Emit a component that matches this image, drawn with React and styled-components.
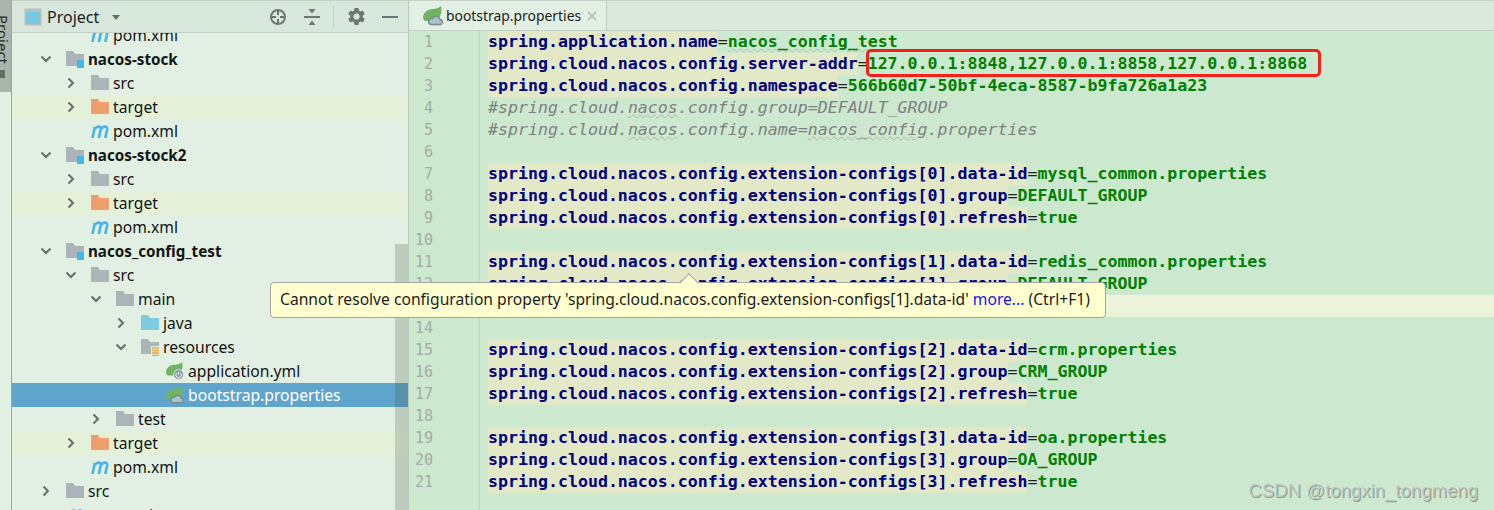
import React from "react";
import styled, { createGlobalStyle } from "styled-components";
import { MdSettings } from "react-icons/md";

const GlobalStyle = createGlobalStyle`
  html, body {
    margin: 0;
    padding: 0;
    background: #cce8cf;
  }
  * {
    box-sizing: border-box;
  }
`;

const UI_FONT = `"Noto Sans", "Open Sans", sans-serif`;
const MONO_FONT = `"DejaVu Sans Mono", "Liberation Mono", monospace`;

const TREE = [
  { label: "pom.xml", depth: 2, icon: "maven" },
  { label: "nacos-stock", depth: 1, icon: "module", open: true, bold: true },
  { label: "src", depth: 2, icon: "folder", closed: true },
  { label: "target", depth: 2, icon: "target", closed: true, excluded: true },
  { label: "pom.xml", depth: 2, icon: "maven" },
  { label: "nacos-stock2", depth: 1, icon: "module", open: true, bold: true },
  { label: "src", depth: 2, icon: "folder", closed: true },
  { label: "target", depth: 2, icon: "target", closed: true, excluded: true },
  { label: "pom.xml", depth: 2, icon: "maven" },
  { label: "nacos_config_test", depth: 1, icon: "module", open: true, bold: true },
  { label: "src", depth: 2, icon: "folder", open: true },
  { label: "main", depth: 3, icon: "folder", open: true },
  { label: "java", depth: 4, icon: "java", closed: true },
  { label: "resources", depth: 4, icon: "resources", open: true },
  { label: "application.yml", depth: 5, icon: "springPower" },
  { label: "bootstrap.properties", depth: 5, icon: "springCloud", selected: true },
  { label: "test", depth: 3, icon: "folder", closed: true },
  { label: "target", depth: 2, icon: "target", closed: true, excluded: true },
  { label: "pom.xml", depth: 2, icon: "maven" },
  { label: "src", depth: 1, icon: "folder", closed: true },
  { label: "pom.xml", depth: 1, icon: "maven" },
];

const EXT = "spring.cloud.nacos.config.extension-configs";

const CODE = [
  { k: "spring.application.name", v: "nacos_config_test", squiggle: true },
  { k: "spring.cloud.nacos.config.server-addr", v: "127.0.0.1:8848,127.0.0.1:8858,127.0.0.1:8868" },
  { k: "spring.cloud.nacos.config.namespace", v: "566b60d7-50bf-4eca-8587-b9fa726a1a23" },
  { comment: ["#spring.cloud.", "nacos", ".config.group=DEFAULT_GROUP"] },
  { comment: ["#spring.cloud.", "nacos", ".config.name=", "nacos_config", ".properties"] },
  {},
  { k: `${EXT}[0].data-id`, v: "mysql_common.properties" },
  { k: `${EXT}[0].group`, v: "DEFAULT_GROUP" },
  { k: `${EXT}[0].refresh`, v: "true" },
  {},
  { k: `${EXT}[1].data-id`, v: "redis_common.properties" },
  { k: `${EXT}[1].group`, v: "DEFAULT_GROUP" },
  { k: `${EXT}[1].refresh`, v: "true", caret: true },
  {},
  { k: `${EXT}[2].data-id`, v: "crm.properties" },
  { k: `${EXT}[2].group`, v: "CRM_GROUP" },
  { k: `${EXT}[2].refresh`, v: "true" },
  {},
  { k: `${EXT}[3].data-id`, v: "oa.properties" },
  { k: `${EXT}[3].group`, v: "OA_GROUP" },
  { k: `${EXT}[3].refresh`, v: "true" },
];

const FolderShape = ({ fill }) => (
  <path d="M0 1h7l2 3h9v12H0z" fill={fill} />
);

const LEAF = "M0 11C1 5 6 3 10 3c3 0 6-1 8-3 1 5 0 10-3 13-2 2-5 2-8 2H3c-2 0-3-2-3-4z";

const TreeIcon = ({ type }) => {
  if (type === "maven") {
    return (
      <svg width="18" height="15" viewBox="0 0 18 15">
        <path
          d="M1.500 14 3.800 3M3.500 5.500C5 3.500 6.600 2.500 8 2.700c1.700.3 2 1.400 1.700 2.800L7.900 14M9.900 5.500c1.300-2 3-3 4.500-2.800 1.700.3 2 1.400 1.700 2.800L14.300 14"
          fill="none"
          stroke="#4db6e4"
          strokeWidth="2.700"
        />
      </svg>
    );
  }
  if (type === "springPower" || type === "springCloud") {
    return (
      <svg width="20" height="20" viewBox="0 0 20 20">
        <path d={LEAF} fill="#6eb463" />
        {type === "springPower" ? (
          <>
            <circle cx="14" cy="14" r="5.500" fill="#8c9aa5" stroke="#e1f0e2" />
            <path d="M14 11v3M11.900 12.300a3 3 0 1 0 4.200 0" fill="none" stroke="#fff" strokeWidth="1" />
          </>
        ) : (
          <path
            d="M8 18.500h8.500a2.500 2.500 0 0 0 .5-5 4 4 0 0 0-7.500-1 3 3 0 0 0-1.500 6z"
            fill="#a9c4c8"
            stroke="#76858f"
            strokeWidth="1.400"
          />
        )}
      </svg>
    );
  }
  const fills = {
    folder: "#aab4b9",
    module: "#aab4b9",
    resources: "#aab4b9",
    target: "#ee9e6e",
    java: "#7fcbe4",
  };
  return (
    <svg width="18" height="18" viewBox="0 0 18 18">
      <FolderShape fill={fills[type]} />
      {type === "module" && <rect x="11" y="10" width="8" height="8" fill="#45b8e6" />}
      {type === "resources" && (
        <>
          <rect x="10" y="8" width="8" height="10" fill="#e1f0e2" />
          <path d="M11 10h7M11 12.500h7M11 15h7M11 17.500h7" stroke="#e3a74f" strokeWidth="1.300" />
        </>
      )}
    </svg>
  );
};

const Chevron = ({ open }) => (
  <svg width="12" height="12" viewBox="0 0 12 12">
    <path
      d={open ? "M1.500 3.500 6 8l4.500-4.500" : "M3.500 1.500 8 6l-4.500 4.500"}
      fill="none"
      stroke="#666d6d"
      strokeWidth="2"
    />
  </svg>
);

const App = () => {
  return (
    <>
      <GlobalStyle />
      <Page>
        <SideStrip>
          <StripTab>
            <StripLabel>Project</StripLabel>
            <StripMark />
          </StripTab>
        </SideStrip>

        <Sidebar>
          <PanelHeader>
            <svg width="18" height="18" viewBox="0 0 18 18">
              <rect x="0.500" y="0.500" width="17" height="17" fill="#b6c0c0" />
              <rect x="2" y="4" width="14" height="12" fill="#78c8e2" />
            </svg>
            <PanelTitle>Project</PanelTitle>
            <DropCaret />
            <HeaderActions>
              <HeaderIcon $width={34}>
                <svg width="18" height="18" viewBox="0 0 18 18" fill="none" stroke="#6e7576" strokeWidth="2">
                  <circle cx="9" cy="9" r="7" />
                  <path d="M9 2v5M9 11v5M2 9h5M11 9h5" />
                </svg>
              </HeaderIcon>
              <HeaderIcon $width={34}>
                <svg width="16" height="18" viewBox="0 0 16 18" fill="#6e7576">
                  <path d="M4.500 1h7L8 5.500zM4.500 17h7L8 12.500z" />
                  <rect x="0" y="8" width="16" height="2" />
                </svg>
              </HeaderIcon>
              <HeaderDivider />
              <HeaderIcon $width={44} $gap={4}>
                <MdSettings size={21} color="#6e7576" />
              </HeaderIcon>
              <HeaderIcon $width={16}>
                <MinusBar />
              </HeaderIcon>
            </HeaderActions>
          </PanelHeader>

          <TreeArea>
            <TreeScrollbar />
            {TREE.map((row, i) => (
              <TreeRow key={i} $selected={row.selected} $excluded={row.excluded} $depth={row.depth}>
                <ArrowSlot>
                  {(row.open || row.closed) && <Chevron open={row.open} />}
                </ArrowSlot>
                <IconSlot>
                  <TreeIcon type={row.icon} />
                </IconSlot>
                <RowLabel $bold={row.bold} $selected={row.selected}>
                  {row.label}
                </RowLabel>
              </TreeRow>
            ))}
          </TreeArea>
        </Sidebar>

        <Editor>
          <TabBar>
            <FileTab>
              <TreeIcon type="springCloud" />
              <TabName>bootstrap.properties</TabName>
              <TabClose>
                <svg width="10" height="10" viewBox="0 0 10 10">
                  <path d="M1 1l8 8M9 1l-8 8" stroke="#a9b5ae" strokeWidth="1.300" />
                </svg>
              </TabClose>
            </FileTab>
          </TabBar>

          <EditorBody>
            <Gutter>
              {CODE.map((_, i) => (
                <LineNumber key={i}>{i + 1}</LineNumber>
              ))}
            </Gutter>
            <CodeArea>
              {CODE.map((line, i) => (
                <CodeLine key={i} $caret={line.caret}>
                  {line.k && (
                    <>
                      <PropKey>{line.k}</PropKey>
                      <Equals>=</Equals>
                      <PropValue $squiggle={line.squiggle}>{line.v}</PropValue>
                    </>
                  )}
                  {line.comment && (
                    <Comment>
                      {line.comment.map((part, j) =>
                        j % 2 === 1 ? <Typo key={j}>{part}</Typo> : <span key={j}>{part}</span>
                      )}
                    </Comment>
                  )}
                </CodeLine>
              ))}
            </CodeArea>
          </EditorBody>

          <RedBox />
          <Tooltip>
            Cannot resolve configuration property
            {" 'spring.cloud.nacos.config.extension-configs[1].data-id' "}
            <MoreLink>more...</MoreLink> (Ctrl+F1)
          </Tooltip>
          <Watermark>CSDN @tongxin_tongmeng</Watermark>
        </Editor>
      </Page>
    </>
  );
};

const Page = styled.div`
  position: relative;
  display: flex;
  width: 1494px;
  height: 510px;
  overflow: hidden;
  background: #cce8cf;
  font-family: ${UI_FONT};
`;

const SideStrip = styled.div`
  flex: 0 0 12px;
  background: #e1f0e2;
  border-right: 1px solid #9aa59c;
`;

const StripTab = styled.div`
  display: flex;
  flex-direction: column;
  height: 92px;
  overflow: hidden;
  background: #a9b4aa;
`;

const StripLabel = styled.div`
  writing-mode: vertical-rl;
  height: 70px;
  padding-top: 15px;
  margin-left: -11px;
  font-size: 15px;
  line-height: 16px;
  color: #2a2a2a;
`;

const StripMark = styled.div`
  width: 5px;
  height: 8px;
  background: #666b68;
`;

const Sidebar = styled.aside`
  flex: 0 0 397px;
  display: flex;
  flex-direction: column;
  background: #e1f0e2;
  border-right: 1px solid #b9c8bc;
  border-top: 1px solid #c4d0c6;
`;

const PanelHeader = styled.header`
  position: relative;
  z-index: 2;
  flex: 0 0 32px;
  display: flex;
  align-items: center;
  padding-left: 12px;
  background: #d8e7db;
  border-bottom: 1px solid #c2d0c5;
`;

const PanelTitle = styled.span`
  margin-left: 5px;
  font-size: 16px;
  color: #1c1c1c;
`;

const DropCaret = styled.span`
  width: 0;
  height: 0;
  margin-left: 13px;
  margin-top: 2px;
  border-left: 4px solid transparent;
  border-right: 4px solid transparent;
  border-top: 5px solid #666d6d;
`;

const HeaderActions = styled.div`
  display: flex;
  align-items: center;
  margin-left: auto;
  padding-right: 10px;
`;

const HeaderIcon = styled.span`
  display: flex;
  align-items: center;
  justify-content: center;
  width: ${(p) => p.$width}px;
  height: 24px;
  margin-right: ${(p) => p.$gap || 0}px;
`;

const HeaderDivider = styled.span`
  width: 1px;
  height: 22px;
  margin-left: 4px;
  background: #c2d0c5;
`;

const MinusBar = styled.span`
  display: block;
  width: 16px;
  height: 2px;
  background: #6e7576;
`;

const TreeArea = styled.div`
  position: relative;
  flex: 1;
  margin-top: -10px;
  overflow: hidden;
`;

const TreeScrollbar = styled.div`
  position: absolute;
  z-index: 1;
  top: 221px;
  right: 0;
  bottom: 0;
  width: 13px;
  background: rgba(60, 80, 65, 0.22);
`;

const TreeRow = styled.div`
  display: flex;
  align-items: center;
  height: 24px;
  padding-left: ${(p) => 3 + p.$depth * 25}px;
  background: ${(p) =>
    p.$selected ? "#5fa5cb" : p.$excluded ? "#e4f1d8" : "transparent"};
`;

const ArrowSlot = styled.span`
  display: flex;
  align-items: center;
  justify-content: center;
  width: 12px;
  height: 12px;
  margin-right: 14px;
`;

const IconSlot = styled.span`
  display: flex;
  align-items: center;
  width: 18px;
  height: 20px;
  margin-right: 4px;
`;

const RowLabel = styled.span`
  font-size: ${(p) => (p.$bold ? "15.200px" : "15.700px")};
  white-space: nowrap;
  font-weight: ${(p) => (p.$bold ? 700 : 400)};
  color: ${(p) => (p.$selected ? "#ffffff" : "#141414")};
`;

const Editor = styled.main`
  position: relative;
  flex: 1;
  display: flex;
  flex-direction: column;
  min-width: 0;
`;

const TabBar = styled.div`
  flex: 0 0 31px;
  display: flex;
  background: #dbe9dc;
  border-top: 1px solid #c4d0c6;
  border-bottom: 1px solid #c2d0c5;
`;

const FileTab = styled.div`
  display: flex;
  align-items: center;
  width: 198px;
  padding-left: 14px;
  background: #e1f0e2;
  border-right: 1px solid #c2d0c5;
`;

const TabName = styled.span`
  margin-left: 3px;
  font-size: 13.900px;
  color: #1c1c1c;
`;

const TabClose = styled.span`
  display: flex;
  margin-left: 6px;
`;

const EditorBody = styled.div`
  flex: 1;
  display: flex;
  min-height: 0;
`;

const Gutter = styled.div`
  flex: 0 0 71px;
  border-right: 1px solid #bdd5c0;
  padding-right: 46px;
`;

const LineNumber = styled.div`
  height: 22px;
  text-align: right;
  font-family: ${MONO_FONT};
  font-size: 15px;
  line-height: 22px;
  color: #a3aca5;
`;

const CodeArea = styled.div`
  flex: 1;
  min-width: 0;
`;

const CodeLine = styled.div`
  height: 22px;
  padding-left: 8px;
  white-space: pre;
  font-family: ${MONO_FONT};
  font-size: 16.600px;
  line-height: 22px;
  background: ${(p) => (p.$caret ? "#ebf3da" : "transparent")};
`;

const PropKey = styled.span`
  display: inline-block;
  height: 22px;
  font-weight: 700;
  color: #000080;
  background: #e3e8c6;
`;

const Equals = styled.span`
  color: #222;
`;

const PropValue = styled.span`
  font-weight: 700;
  color: #008000;
  text-decoration: ${(p) => (p.$squiggle ? "underline wavy #a9c3a2 1px" : "none")};
`;

const Comment = styled.span`
  font-style: italic;
  color: #808080;
`;

const Typo = styled.span`
  text-decoration: underline wavy #a9b8a2 1px;
`;

const RedBox = styled.div`
  position: absolute;
  left: 457px;
  top: 49px;
  width: 455px;
  height: 28px;
  border: 3.500px solid #f3211a;
  border-radius: 5px;
  pointer-events: none;
`;

const Tooltip = styled.div`
  position: absolute;
  z-index: 3;
  left: -139px;
  top: 282px;
  width: 836px;
  height: 36px;
  padding-left: 9px;
  font-size: 15.650px;
  line-height: 33px;
  white-space: nowrap;
  color: #1c1c1c;
  background: #ffffcf;
  border: 1px solid #a3a3a3;
  border-radius: 4px;

  &::before {
    content: "";
    position: absolute;
    left: 411px;
    top: -7px;
    width: 13px;
    height: 13px;
    background: #ffffcf;
    border-top: 1px solid #a3a3a3;
    border-left: 1px solid #a3a3a3;
    transform: rotate(45deg);
  }
`;

const MoreLink = styled.span`
  color: #1414e6;
`;

const Watermark = styled.div`
  position: absolute;
  right: 16px;
  bottom: 8px;
  font-family: "Liberation Sans", Arial, sans-serif;
  font-size: 18.600px;
  color: #b7c9ba;
  text-shadow: 1px 1px 0 #8e9a90, -0.5px -0.5px 0 #f2f7f2;
`;

export default App;
